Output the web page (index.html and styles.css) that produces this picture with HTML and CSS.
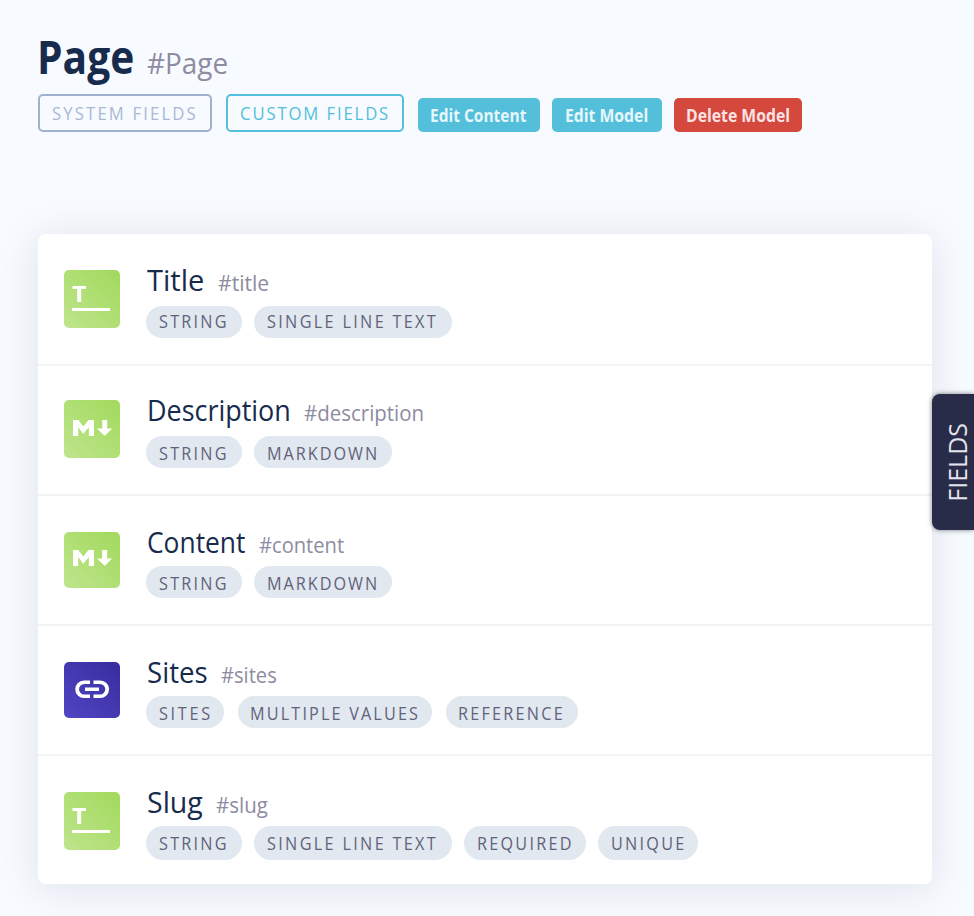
FILE: index.html
```html
<!DOCTYPE html>
<html lang="en">
<head>
<meta charset="utf-8">
<title>Page model</title>
<link rel="stylesheet" href="styles.css">
</head>
<body>
<svg class="sprite" aria-hidden="true">
  <symbol id="text-line" viewBox="0 0 56 58"><path d="M8.5 16h13.5v3h-4.8v13h-4V19H8.500z"/><path d="M8 38h38v3H8z"/></symbol>
  <symbol id="markdown" viewBox="0 0 56 58"><path d="M9 20h5.300l5.100 6.600 5-6.600H30v16h-5.200v-8.800l-5.500 6.500-5.100-6.500V36H9zM38.200 20h5v8.500h5L40.700 36 33 28.500h5.200z"/></symbol>
  <symbol id="markdown-short" viewBox="0 0 56 56"><path d="M9 18h5.300l5.100 6.600 5-6.600H30v16h-5.200v-8.800l-5.500 6.500-5.100-6.500V34H9zM38.200 18h5v8.500h5L40.700 34 33 26.500h5.200z"/></symbol>
  <symbol id="link" viewBox="0 0 56 56"><path d="M26 18.500h-6a8.750 8.750 0 0 0 0 17.500h6v-3.500h-5.700a5.250 5.250 0 0 1 0-10.500H26zM29.500 18.500h6.800a8.750 8.750 0 0 1 0 17.500h-6.800v-3.500H36a5.250 5.250 0 0 0 0-10.500h-6.500zM21 25.500h14V29H21z"/></symbol>
</svg>
<header class="header">
  <h1 class="heading"><span class="name"><b>Page</b></span><span class="api">#Page</span></h1>
  <nav class="actions">
    <button class="toggle system"><b>SYSTEM FIELDS</b></button>
    <button class="toggle custom"><b>CUSTOM FIELDS</b></button>
    <button class="btn content"><b>Edit Content</b></button>
    <button class="btn model"><b>Edit Model</b></button>
    <button class="btn delete"><b>Delete Model</b></button>
  </nav>
</header>
<main class="card">
  <section class="field title">
    <svg class="icon"><use href="#text-line"/></svg>
    <div class="info"><h2><span class="name"><b>Title</b></span><span class="api">#title</span></h2>
      <div class="tags"><span class="tag string"><b>STRING</b></span><span class="tag single"><b>SINGLE LINE TEXT</b></span></div></div>
  </section>
  <section class="field description">
    <svg class="icon"><use href="#markdown"/></svg>
    <div class="info"><h2><span class="name"><b>Description</b></span><span class="api">#description</span></h2>
      <div class="tags"><span class="tag string"><b>STRING</b></span><span class="tag markdown"><b>MARKDOWN</b></span></div></div>
  </section>
  <section class="field body">
    <svg class="icon short"><use href="#markdown-short"/></svg>
    <div class="info"><h2><span class="name"><b>Content</b></span><span class="api">#content</span></h2>
      <div class="tags"><span class="tag string"><b>STRING</b></span><span class="tag markdown"><b>MARKDOWN</b></span></div></div>
  </section>
  <section class="field sites">
    <svg class="icon short relation"><use href="#link"/></svg>
    <div class="info"><h2><span class="name"><b>Sites</b></span><span class="api">#sites</span></h2>
      <div class="tags"><span class="tag site"><b>SITES</b></span><span class="tag multiple"><b>MULTIPLE VALUES</b></span><span class="tag reference"><b>REFERENCE</b></span></div></div>
  </section>
  <section class="field slug">
    <svg class="icon"><use href="#text-line"/></svg>
    <div class="info"><h2><span class="name"><b>Slug</b></span><span class="api">#slug</span></h2>
      <div class="tags"><span class="tag string"><b>STRING</b></span><span class="tag single"><b>SINGLE LINE TEXT</b></span><span class="tag required"><b>REQUIRED</b></span><span class="tag unique"><b>UNIQUE</b></span></div></div>
  </section>
</main>
<aside class="drawer"><span>FIELDS</span></aside>
</body>
</html>
```
FILE: styles.css
```css
* { box-sizing: border-box; }
body {
  margin: 0;
  height: 916px;
  padding: 34px 42px 0 38px;
  overflow: hidden;
  background: #f7faff;
  color: #172b4d;
  font-family: "Open Sans", "Noto Sans", sans-serif;
}
.sprite { position: absolute; width: 0; height: 0; }
h1, h2 { margin: 0; font-weight: 400; white-space: nowrap; display: flex; align-items: baseline; }
/* Condensed labels */
b { display: inline-block; font-weight: inherit; transform: scaleX(.9); transform-origin: left; }
.api { transform: scaleX(.93); transform-origin: left; color: #8d8ca1; }
.heading { height: 60px; line-height: 44px; }
.heading .name { width: 109px; font-size: 46px; font-weight: 700; }
.heading .name b { transform: translateX(-1px) scaleX(.885); }
.heading .api { font-size: 30px; }
.actions { display: flex; align-items: flex-end; height: 38px; }
button { font: inherit; white-space: nowrap; padding: 0; border: 0; border-radius: 5px; }
.toggle { height: 38px; border: 2px solid; background: none; font-size: 18.5px; line-height: 34px; text-align: left; padding-left: 12px; }
.system { width: 174px; margin-right: 14px; border-color: #9fb1cf; color: #a9b8d3; letter-spacing: 2.4px; }
.custom { width: 178px; margin-right: 14px; border-color: #54bfda; color: #54bfda; letter-spacing: 2.1px; }
.btn { height: 34px; font-size: 17.5px; font-weight: 700; line-height: 35px; color: #e5f7fc; background: #54bfda; margin-right: 12px; text-align: left; padding-left: 12px; }
.content { width: 122px; }
.content b { transform: scaleX(.885); }
.model { width: 110px; padding-left: 13px; }
.delete { width: 128px; background: #d4483e; color: #fbe2e2; }
.card { margin-top: 102px; height: 650px; border-radius: 8px; background: #fff; box-shadow: 0 4px 40px rgba(23, 43, 60, .11); }
.field { display: flex; height: 130px; padding: 34px 0 0 26px; }
.field:first-child { height: 132px; padding-top: 36px; }
.field:last-child { height: 128px; padding-top: 36px; }
.field:not(:last-child) { border-bottom: 2px solid #f3f4f6; }
.body, .sites { padding-top: 36px; }
.icon { width: 56px; height: 58px; border-radius: 5px; fill: #fff; background: linear-gradient(45deg, #bfe58d, #a1d95c); }
.short { height: 56px; }
.relation { background: linear-gradient(45deg, #5146c4, #372c9d); }
.info { margin-left: 26px; }
h2 { height: 36px; line-height: 20px; padding-left: 1px; font-size: 28.5px; }
h2 .api { font-size: 22px; }
.tags { display: flex; gap: 12px; }
.tag { height: 32px; border-radius: 17px; background: #e1e8f0; color: #626279; font-size: 18px; letter-spacing: 2.5px; line-height: 35px; padding-left: 13px; white-space: nowrap; }
.title .tag { line-height: 31px; }
.sites .tags { gap: 14px; }
.slug .tag { height: 34px; }
.body .tags, .sites .tags, .slug .tags { margin-top: -2px; }
.string { width: 96px; }
.single { width: 198px; letter-spacing: 2.6px; }
.markdown { width: 138px; letter-spacing: 2.2px; }
.site { width: 78px; letter-spacing: 3px; }
.multiple { width: 194px; letter-spacing: 2.4px; padding-left: 12px; }
.reference { width: 132px; padding-left: 12px; }
.required { width: 122px; }
.unique { width: 100px; }
.title .name { width: 71px; }
.title .name b { transform: scaleX(1.02); }
.description .name { width: 157px; }
.description .name b { transform: scaleX(.945); }
.body .name { width: 112px; }
.body .name b { transform: scaleX(.925); }
.sites .name { width: 74px; }
.sites .name b { transform: scaleX(.97); }
.slug .name { width: 69px; }
.slug .name b { transform: none; }
.title .api { transform: scaleX(.96); }
.body .api, .sites .api { transform: scaleX(.915); }
.drawer { position: absolute; left: 932px; top: 394px; width: 42px; height: 136px; border-radius: 8px 0 0 8px; background: #292c49; box-shadow: 0 0 5px rgba(0, 0, 0, .5); color: #e4e3eb; font-size: 25px; display: flex; align-items: center; justify-content: center; }
.drawer span { writing-mode: vertical-rl; transform: rotate(180deg); padding-right: 8px; }
```
